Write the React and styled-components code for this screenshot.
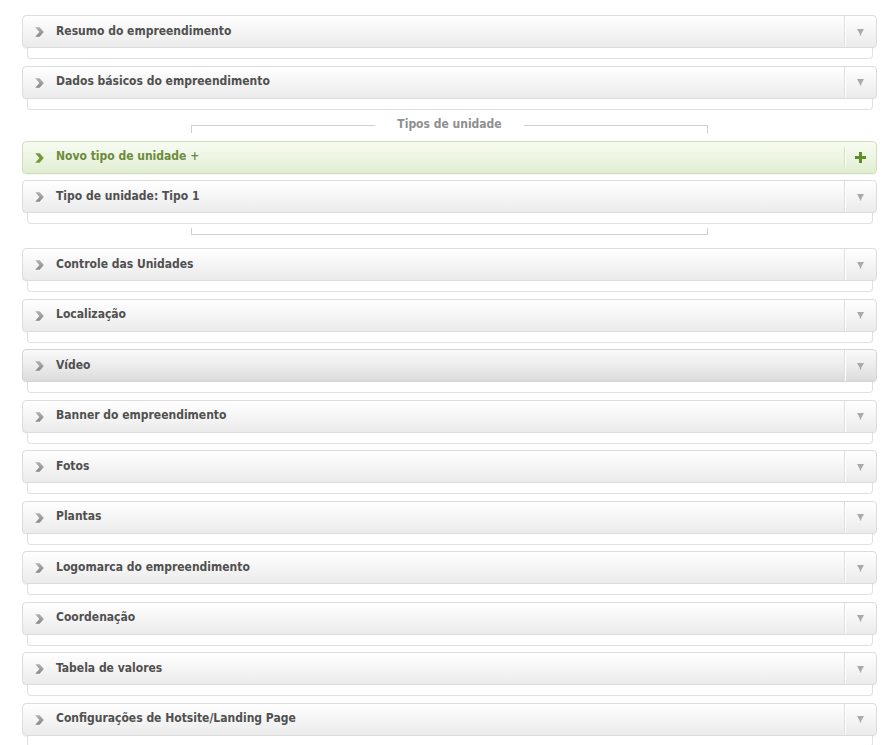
import React from 'react'
import styled, { createGlobalStyle, css } from 'styled-components'

const GlobalStyle = createGlobalStyle`
  html, body {
    margin: 0;
    padding: 0;
    background: #fff;
    overflow: hidden;
  }
  body {
    font-family: Tahoma, "DejaVu Sans Condensed", "DejaVu Sans", sans-serif;
  }
`

const Page = styled.div`
  width: 855px;
  padding: 15px 0 0 22px;
  display: flex;
  flex-direction: column;
`

const Item = styled.div`
  display: flex;
  flex-direction: column;
  margin-bottom: 6.5px;
`

const Header = styled.div`
  height: 31px;
  display: flex;
  align-items: center;
  border: 1px solid #dcdcdc;
  border-radius: 4px;
  background: linear-gradient(#ffffff, #f6f6f6 45%, #ebebeb);
  box-shadow: 0 1px 0 rgba(0, 0, 0, 0.04);
  cursor: pointer;

  ${({ $hover }) =>
    $hover &&
    css`
      background: linear-gradient(#fafafa, #ececec 50%, #dcdcdc);
      border-color: #d4d4d4;
    `}

  ${({ $green }) =>
    $green &&
    css`
      background: linear-gradient(#f7fbf1, #edf5e3 50%, #e1edd2);
      border-color: #cfdfba;
    `}
`

const Chevron = styled.span`
  width: 33px;
  display: flex;
  justify-content: center;
  margin-top: 1px;
`

const Title = styled.span`
  flex: 1;
  font-size: 12px;
  font-weight: bold;
  color: ${({ $green }) => ($green ? '#6b8c3e' : '#505050')};
  padding-bottom: 2px;
`

const Side = styled.span`
  width: 31px;
  height: 100%;
  display: flex;
  align-items: center;
  justify-content: center;
  border-left: 1px solid #e0e0e0;
  box-shadow: inset 1px 0 0 #fff;

  ${({ $green }) =>
    $green &&
    css`
      border-left-color: #d3e2c0;
      height: 20px;
    `}
`

const Body = styled.div`
  height: 10px;
  margin: 0 4px 0 5px;
  border: 1px solid #e0e0e0;
  border-top: none;
  border-radius: 0 0 4px 4px;
  background: #fff;
`

const Group = styled.div`
  display: flex;
  flex-direction: column;
  margin-bottom: 13px;
`

const TopBracket = styled.div`
  width: 517px;
  height: 17px;
  align-self: center;
  display: flex;
  align-items: flex-start;
  gap: 22px;
  margin-bottom: 7.5px;
`

const Line = styled.span`
  flex: 1;
  height: 7px;
  margin-top: 9px;
  border: 0 solid #cfcfcf;
  border-top-width: 1px;
  ${({ $left }) => ($left ? 'border-left-width: 1px;' : '')}
  ${({ $right }) => ($right ? 'border-right-width: 1px;' : '')}
`

const Legend = styled.span`
  font-size: 12px;
  line-height: 17px;
  font-weight: bold;
  color: #8f8f8f;
`

const BottomBracket = styled.div`
  width: 515px;
  height: 6px;
  align-self: center;
  margin-top: -2.5px;
  border: 1px solid #cfcfcf;
  border-top: none;
`

const ChevronIcon = ({ green }) => (
  <svg width="9" height="10" viewBox="0 0 9 10">
    <defs>
      <linearGradient id="cg" x1="0" y1="0" x2="0" y2="1">
        <stop offset="0" stopColor="#b0b0b0" />
        <stop offset="1" stopColor="#888" />
      </linearGradient>
    </defs>
    <path
      d="M0.3 0.3 L4.6 0.3 L8.8 5 L4.6 9.7 L0.3 9.7 L4.4 5 Z"
      fill={green ? '#6f9a3c' : 'url(#cg)'}
    />
  </svg>
)

const DownIcon = () => (
  <svg width="7" height="8" viewBox="0 0 7 8">
    <path d="M0 1 L7 1 L4.2 6 L4.2 7.5 L2.8 7.5 L2.8 6 Z" fill="#aaa" />
  </svg>
)

const PlusIcon = () => (
  <svg width="11" height="11" viewBox="0 0 11 11">
    <path d="M4 0 H7 V4 H11 V7 H7 V11 H4 V7 H0 V4 H4 Z" fill="#5e8f2b" />
  </svg>
)

const Section = ({ title, hover }) => (
  <Item>
    <Header $hover={hover}>
      <Chevron>
        <ChevronIcon />
      </Chevron>
      <Title>{title}</Title>
      <Side>
        <DownIcon />
      </Side>
    </Header>
    <Body />
  </Item>
)

const top = ['Resumo do empreendimento', 'Dados básicos do empreendimento']

const rest = [
  'Controle das Unidades',
  'Localização',
  'Vídeo',
  'Banner do empreendimento',
  'Fotos',
  'Plantas',
  'Logomarca do empreendimento',
  'Coordenação',
  'Tabela de valores',
  'Configurações de Hotsite/Landing Page',
]

export default function App() {
  return (
    <>
      <GlobalStyle />
      <Page>
        {top.map((t) => (
          <Section key={t} title={t} />
        ))}

        <Group>
          <TopBracket>
            <Line $left />
            <Legend>Tipos de unidade</Legend>
            <Line $right />
          </TopBracket>

          <Item>
            <Header $green>
              <Chevron>
                <ChevronIcon green />
              </Chevron>
              <Title $green>Novo tipo de unidade +</Title>
              <Side $green>
                <PlusIcon />
              </Side>
            </Header>
          </Item>

          <Section title="Tipo de unidade: Tipo 1" />

          <BottomBracket />
        </Group>

        {rest.map((t) => (
          <Section key={t} title={t} hover={t === 'Vídeo'} />
        ))}
      </Page>
    </>
  )
}
